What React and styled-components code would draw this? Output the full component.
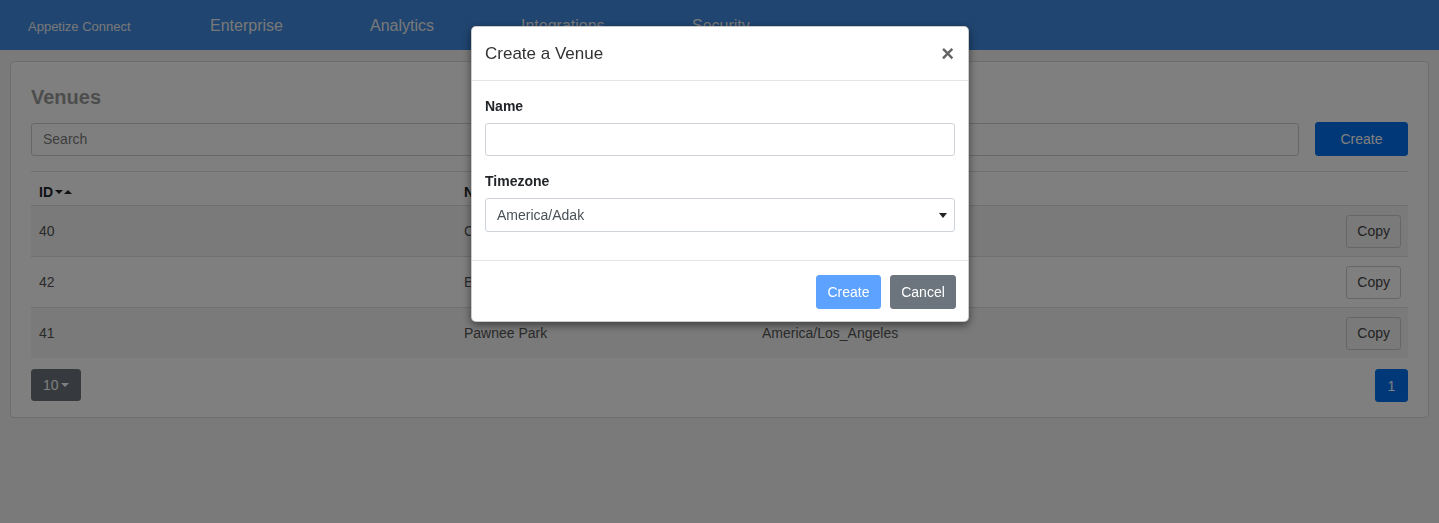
import React from "react";
import styled, { createGlobalStyle } from "styled-components";

const GlobalStyle = createGlobalStyle`
  html, body {
    margin: 0;
    padding: 0;
    background: #f4f4f4;
    font-family: "Liberation Sans", Arial, sans-serif;
    font-size: 14px;
    color: #555;
  }
  * { box-sizing: border-box; }
`;

const Navbar = styled.nav`
  height: 50px;
  background: #3e8ae0;
  display: flex;
  align-items: center;
  padding: 2px 0 0 28px;
`;

const Brand = styled.span`
  font-size: 13px;
  color: #f0f0f0;
  width: 182px;
`;

const NavLink = styled.span`
  font-size: 16px;
  color: #f0f0f0;
  width: ${(p) => p.w}px;
`;

const Container = styled.div`
  padding: 11px 10px;
`;

const Card = styled.div`
  background: #fff;
  border: 1px solid #dcdcdc;
  border-radius: 4px;
  padding: 20px 20px 15px;
`;

const Title = styled.h4`
  margin: 0 0 10px;
  font-size: 20px;
  line-height: 30px;
  font-weight: 700;
  color: #9a9a9a;
`;

const SearchRow = styled.div`
  display: flex;
  gap: 16px;
  align-items: center;
`;

const SearchInput = styled.div`
  flex: 1;
  height: 33px;
  border: 1px solid #cfcfcf;
  border-radius: 3px;
  padding: 0 11px;
  display: flex;
  align-items: center;
  color: #7d7d7d;
`;

const Button = styled.div`
  display: inline-flex;
  align-items: center;
  justify-content: center;
  height: ${(p) => p.h || 33}px;
  min-width: ${(p) => p.w || 0}px;
  padding: 0 ${(p) => p.px ?? 12}px;
  border-radius: 3px;
  font-size: 14px;
  color: ${(p) => p.fg || "#fff"};
  background: ${(p) => p.bg || "transparent"};
  border: 1px solid ${(p) => p.border || p.bg || "transparent"};
`;

const Rule = styled.hr`
  margin: 15px 0 0;
  border: 0;
  border-top: 1px solid #dedede;
`;

const Row = styled.div`
  display: grid;
  grid-template-columns: 425px 298px 1fr auto;
  align-items: center;
  background: ${(p) => (p.striped ? "#f4f4f4" : "transparent")};
  border-bottom: ${(p) => (p.last ? "none" : "1px solid #dedede")};
  height: ${(p) => (p.last ? 50 : 51)}px;
  padding-right: 7px;
`;

const HeadRow = styled(Row)`
  height: 34px;
  align-items: end;
  padding-bottom: 5px;
`;

const Cell = styled.div`
  padding-left: 8px;
  color: ${(p) => (p.head ? "#212529" : "#555")};
  font-weight: ${(p) => (p.head ? 700 : 400)};
  display: flex;
  align-items: center;
  white-space: nowrap;
`;

const Caret = styled.span`
  width: 0;
  height: 0;
  border-left: 4px solid transparent;
  border-right: 4px solid transparent;
  ${(p) =>
    p.up
      ? `border-bottom: 4px solid ${p.color || "#212529"};`
      : `border-top: 4px solid ${p.color || "#212529"};`}
  margin-left: ${(p) => p.gap ?? 1}px;
`;

const Footer = styled.div`
  display: flex;
  justify-content: space-between;
  margin-top: 11px;
`;

const Backdrop = styled.div`
  position: fixed;
  inset: 0;
  background: rgba(0, 0, 0, 0.5);
`;

const Modal = styled.div`
  position: fixed;
  top: 26px;
  left: 471px;
  width: 498px;
  background: #fff;
  border: 1px solid rgba(0, 0, 0, 0.2);
  border-radius: 5px;
  box-shadow: 0 3px 9px rgba(0, 0, 0, 0.5);
`;

const ModalHeader = styled.div`
  height: 54px;
  display: flex;
  align-items: center;
  justify-content: space-between;
  padding: 0 13px;
  border-bottom: 1px solid #e5e5e5;
`;

const ModalTitle = styled.h5`
  margin: 0;
  font-size: 17px;
  font-weight: 400;
  color: #333;
`;

const Close = styled.span`
  font-size: 22px;
  font-weight: 700;
  color: #666;
  line-height: 1;
  margin-right: 1px;
`;

const ModalBody = styled.div`
  padding: 15px 13px 13px;
`;

const Group = styled.div`
  margin-bottom: 15px;
`;

const Label = styled.div`
  font-weight: 700;
  color: #212529;
  line-height: 21px;
  margin-bottom: 6px;
`;

const Field = styled.div`
  height: ${(p) => p.h}px;
  border: 1px solid #ced4da;
  border-radius: 3px;
  padding: 0 11px;
  display: flex;
  align-items: center;
  justify-content: space-between;
  color: #495057;
`;

const SelectCaret = styled.span`
  width: 0;
  height: 0;
  border-left: 4px solid transparent;
  border-right: 4px solid transparent;
  border-top: 5px solid #222;
  margin-right: -4px;
`;

const ModalFooter = styled.div`
  border-top: 1px solid #e5e5e5;
  padding: 14px 12px 12px;
  display: flex;
  justify-content: flex-end;
  gap: 9px;
`;

const rows = [
  { id: 40, name: "City Hall", tz: "America/Chicago" },
  { id: 42, name: "Eagleton Center", tz: "America/Denver" },
  { id: 41, name: "Pawnee Park", tz: "America/Los_Angeles" },
];

export default function App() {
  return (
    <>
      <GlobalStyle />
      <Navbar>
        <Brand>Appetize Connect</Brand>
        <NavLink w={160}>Enterprise</NavLink>
        <NavLink w={151}>Analytics</NavLink>
        <NavLink w={171}>Integrations</NavLink>
        <NavLink w={100}>Security</NavLink>
      </Navbar>
      <Container>
        <Card>
          <Title>Venues</Title>
          <SearchRow>
            <SearchInput>Search</SearchInput>
            <Button bg="#0070f0" w={93} h={34}>Create</Button>
          </SearchRow>
          <Rule />
          <HeadRow>
            <Cell head>
              ID
              <Caret gap={2} />
              <Caret up gap={1} />
            </Cell>
            <Cell head>Name</Cell>
            <Cell head>Timezone</Cell>
            <Cell head />
          </HeadRow>
          {rows.map((r, i) => (
            <Row key={r.id} striped={i % 2 === 0} last={i === rows.length - 1}>
              <Cell>{r.id}</Cell>
              <Cell>{r.name}</Cell>
              <Cell>{r.tz}</Cell>
              <Button border="#cccccc" fg="#444" px={10} h={33}>Copy</Button>
            </Row>
          ))}
          <Footer>
            <Button bg="#6c757d" px={11} h={32}>
              10
              <Caret color="#fff" gap={2} />
            </Button>
            <Button bg="#0070f0" w={33} px={0} h={33}>1</Button>
          </Footer>
        </Card>
      </Container>
      <Backdrop />
      <Modal>
        <ModalHeader>
          <ModalTitle>Create a Venue</ModalTitle>
          <Close>×</Close>
        </ModalHeader>
        <ModalBody>
          <Group>
            <Label>Name</Label>
            <Field h={33} />
          </Group>
          <Group>
            <Label>Timezone</Label>
            <Field h={34}>
              America/Adak
              <SelectCaret />
            </Field>
          </Group>
        </ModalBody>
        <ModalFooter>
          <Button bg="#5ea2ff" w={65} px={9} h={34}>Create</Button>
          <Button bg="#6c757d" w={66} px={9} h={34}>Cancel</Button>
        </ModalFooter>
      </Modal>
    </>
  );
}
